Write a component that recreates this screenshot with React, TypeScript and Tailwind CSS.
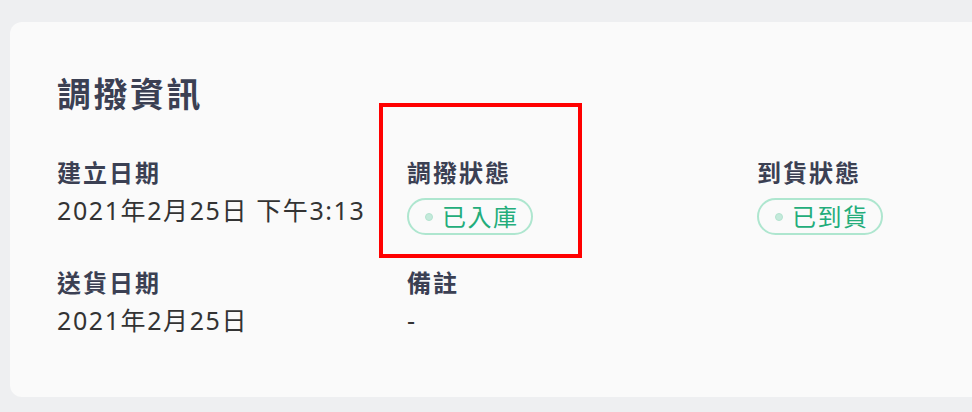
import React from 'react';

type Field = {
  label: string;
  value?: string;
  status?: string;
};

const fields: Field[] = [
  { label: '建立日期', value: '2021年2月25日 下午3:13' },
  { label: '調撥狀態', status: '已入庫' },
  { label: '到貨狀態', status: '已到貨' },
  { label: '送貨日期', value: '2021年2月25日' },
  { label: '備註', value: '-' },
];

const StatusPill: React.FC<{ text: string }> = ({ text }) => (
  <span className="inline-flex items-center h-[37px] pl-4 pr-[12px] gap-[9px] rounded-full border-2 border-[#aee6cf] text-[#23ad7b] text-[24px] tracking-[1.5px] leading-none">
    <span className="w-[8px] h-[8px] rounded-full bg-[#c4eadb] border border-[#b3e3cf]" />
    {text}
  </span>
);

export default function App() {
  return (
    <div
      className="relative w-[972px] h-[412px] overflow-hidden bg-[#eeeff1] pt-[22px] pl-[10px]"
      style={{ fontFamily: '"Noto Sans", "Noto Sans CJK TC", sans-serif' }}
    >
      <div className="h-[375px] rounded-l-xl bg-[#fafafa] pl-[47px] pt-[55px]">
        <h2 className="text-[34px] font-bold tracking-[2.5px] leading-none text-[#3b4053]">調撥資訊</h2>

        <div className="mt-[50px] grid grid-cols-[350px_350px_1fr] gap-y-[36px]">
          {fields.map((f) => (
            <div key={f.label} className="flex flex-col gap-[13px]">
              <span className="text-[24px] font-bold tracking-[2px] leading-none text-[#3b4053]">{f.label}</span>
              {f.status ? (
                <div>
                  <StatusPill text={f.status} />
                </div>
              ) : (
                <span className="text-[25px] tracking-[1.6px] leading-none text-[#333333]">{f.value}</span>
              )}
            </div>
          ))}
        </div>
      </div>

      {/* highlight frame around the transfer status */}
      <div className="absolute left-[379px] top-[103px] w-[203px] h-[155px] border-4 border-[#ff0000]" />
    </div>
  );
}
